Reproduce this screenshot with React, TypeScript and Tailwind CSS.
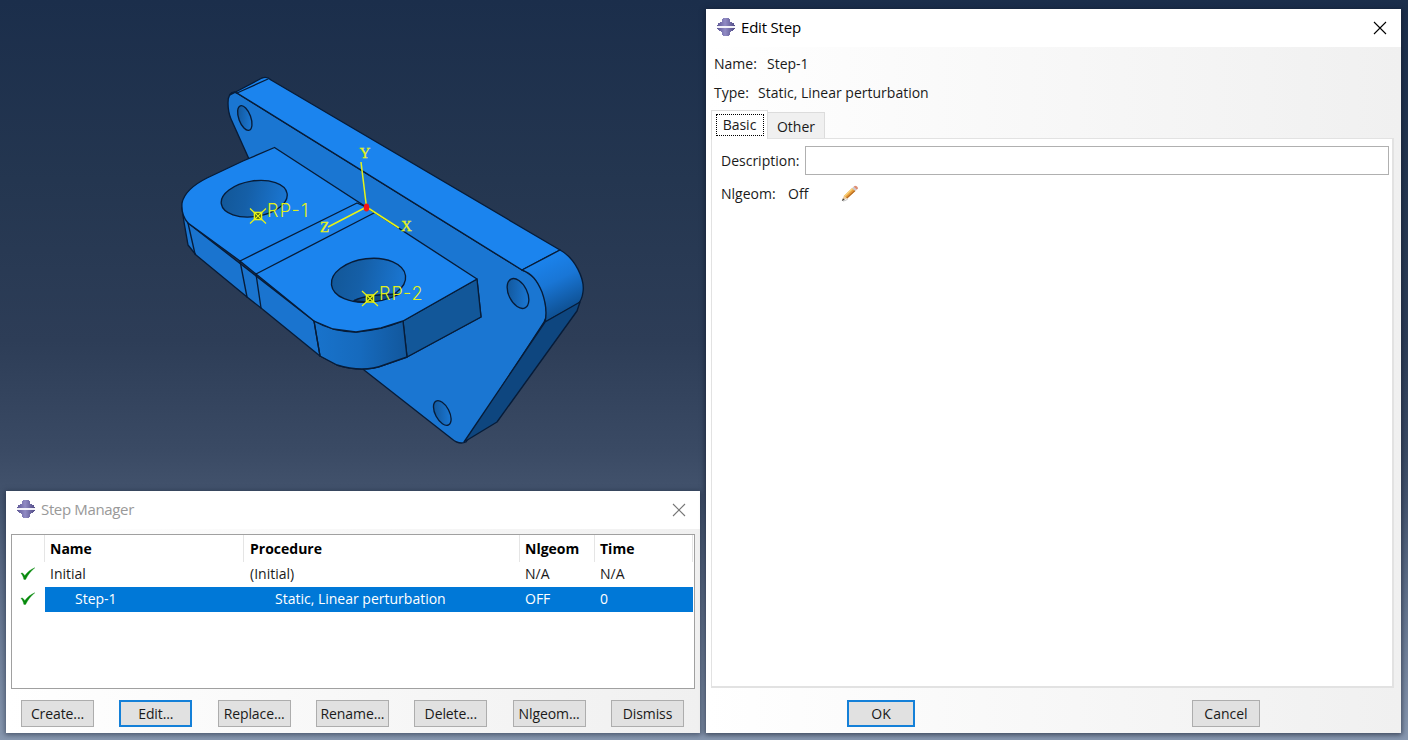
import React from "react";

function AppIcon() {
  return (
    <svg width="18" height="18" viewBox="0 0 18 18" className="shrink-0">
      <defs>
        <linearGradient id="ico" x1="0" x2="1" y1="0" y2="0">
          <stop offset="0" stopColor="#5d5795" />
          <stop offset="0.45" stopColor="#918bc4" />
          <stop offset="1" stopColor="#504a85" />
        </linearGradient>
      </defs>
      <path d="M6 0h6v1h1v3h2v1h2v2h1v1H0V7h1V5h2V4h2V1h1z" fill="url(#ico)" />
      <path d="M0 10h18v1h-1v1h-1v1h-2v1h-1v3h-1v1H6v-1H5v-3H4v-1H2v-1H1v-1H0z" fill="url(#ico)" />
      <path d="M0 8h18v2H0z" fill="#f4f3fa" />
    </svg>
  );
}

function CloseIcon({ color }: { color: string }) {
  return (
    <svg width="14" height="14" viewBox="0 0 14 14" className="shrink-0">
      <path d="M1 1l12 12M13 1L1 13" stroke={color} strokeWidth="1.1" fill="none" />
    </svg>
  );
}

function Check() {
  return (
    <svg width="16" height="14" viewBox="0 0 16 14">
      <path d="M1 6.5C2.2 5.6 3.2 6 4.7 8.8C7.4 5.2 10.6 2.4 14.8 0.8C10.9 3.8 8 7.6 5.6 12.4H3.9C3.3 9.8 2.5 7.8 1 6.5z" fill="#078a0c" stroke="#078a0c" strokeWidth="0.4" />
    </svg>
  );
}

function Pencil() {
  return (
    <svg width="18" height="17" viewBox="0 0 18 17">
      <path d="M1 15.5L3 10.5L6 13.5z" fill="#eccb9d" />
      <path d="M0.8 16L2 13.2L3.8 14.9z" fill="#444" />
      <path d="M3 10.7L11.2 3L14.4 6L6.2 13.6z" fill="#eaa03c" />
      <path d="M3 10.7L11.2 3L12.2 4L4 11.7z" fill="#f9d37d" />
      <path d="M5.2 12.7L13.5 5.2L14.4 6L6.2 13.6z" fill="#b46a24" />
      <path d="M11.2 3L12.6 1.8L15.8 4.8L14.4 6z" fill="#c9c9d2" />
      <path d="M12.6 1.8L14 0.7Q16.5 0.7 17 3.5L15.8 4.8z" fill="#dc8d73" />
      <path d="M2 16.2L5 15.2L7 13.7" stroke="#bbb" strokeWidth=".8" fill="none" />
    </svg>
  );
}

function Marker({ x, y }: { x: number; y: number }) {
  return (
    <g transform={`translate(${x} ${y})`} fill="none" stroke="#e6f318" strokeWidth="1.2">
      <path d="M-8-7.5L8 7.5M8-7.5L-8 7.5" />
      <rect x="-3.5" y="-3.5" width="7" height="7" fill="#23400f" stroke="#e6f318" strokeWidth="1.6" />
      <path d="M-3-3L3 3M3-3L-3 3" />
    </g>
  );
}

function Model() {
  return (
    <svg width="700" height="490" viewBox="0 0 700 490" className="block">
      <defs>
        <linearGradient id="cyl" gradientUnits="userSpaceOnUse" x1="540" y1="258" x2="566" y2="312">
          <stop offset="0" stopColor="#1b84ee" />
          <stop offset="0.45" stopColor="#1976d6" />
          <stop offset="1" stopColor="#0e4f90" />
        </linearGradient>
        <linearGradient id="round" x1="0" x2="1" y1="0" y2="0">
          <stop offset="0" stopColor="#1873cc" />
          <stop offset="0.5" stopColor="#166abd" />
          <stop offset="1" stopColor="#12579c" />
        </linearGradient>
        <linearGradient id="hole" x1="0" x2="1" y1="0.3" y2="0.5">
          <stop offset="0" stopColor="#125798" />
          <stop offset="0.4" stopColor="#155fa7" />
          <stop offset="1" stopColor="#1a76d2" />
        </linearGradient>
        <linearGradient id="small" x1="0" x2="1" y1="0" y2="1">
          <stop offset="0" stopColor="#115292" />
          <stop offset="1" stopColor="#1c7ee0" />
        </linearGradient>
      </defs>
      <g stroke="#071c38" strokeWidth="1.35" strokeLinejoin="round" strokeLinecap="round">
        <path d="M235 92Q228 92 228 103Q228 112 231 119L249 159L364 370L452 439Q459 445 466 442L544 322Q548 316 546 308C545 293 537 273 522 270z" fill="#1a76d2" />
        <path d="M230 95L262 78Q267 76 271 80L560 250L522 270L237 93Q233 91 230 95z" fill="#1b84ee" />
        <path d="M522 270L560 250C575 258 585 279 583 292Q582 300 578 304L545 322Q548 309 542 292C537 280 532 274 522 270z" fill="url(#cyl)" />
        <path d="M545 322L580 302L577 311L497 422L464 442z" fill="#0e467f" />
        <path d="M237 93L268 79" fill="none" />
        <path d="M182 208L184 222L188 245L196 255L247 297L261 308L320 356L337 365Q350 369 362 369Q374 369 384 365L407 357L481 317L477 280L403 321L314 321L188 223z" fill="#1a74cf" />
        <path d="M403 321L477 279L481 317L407 357z" fill="#125799" />
        <path d="M314 321Q333 332 356 332Q379 331 403 321L407 357L384 365Q374 369 362 369Q350 369 337 365L320 356z" fill="url(#round)" />
        <path d="M274.5 147.5L477 279L403 321L381 328L356 332L333 329L314 321L256 274L240 261L188 223Q181 215 182 203Q185 189 207 178L243 161z" fill="#1b84ee" />
        <path d="M188 223L195 254M240 261L247 297M256 274L261 308M314 321L320 356M240 261L357 203L366 207M256 274L374 213" fill="none" />
        <ellipse cx="254.2" cy="198.7" rx="33.3" ry="17.8" transform="rotate(-9 254.2 198.7)" fill="url(#hole)" />
        <ellipse cx="368.5" cy="280.3" rx="37.3" ry="21.7" transform="rotate(-7 368.5 280.3)" fill="url(#hole)" />
        <path d="M354 300.5Q368 294 400 294Q383 302 368 302Q358 302 354 300.5z" fill="#0e4984" />
        <ellipse cx="244.8" cy="118" rx="6" ry="13" transform="rotate(-20 244.8 118)" fill="url(#small)" />
        <ellipse cx="518" cy="293.5" rx="9.2" ry="16" transform="rotate(-26 518 293.5)" fill="url(#small)" />
        <ellipse cx="442.3" cy="413" rx="7" ry="13.4" transform="rotate(-28 442.3 413)" fill="url(#small)" />
      </g>
      <g stroke="#e6f318" strokeWidth="1.5" fill="none">
        <path d="M366.5 207L361 162M366.5 207L328 227M366.5 207L399 228" />
      </g>
      <ellipse cx="366.5" cy="207.5" rx="2.8" ry="4" fill="#f51414" />
      <Marker x={258} y={216} />
      <Marker x={370} y={298.5} />
      <g fill="#e0f01c" className="font-['Inter',sans-serif] text-[18px] font-light">
        <text x="267" y="217" textLength="41">RP-1</text>
        <text x="379" y="299.5" textLength="43.5">RP-2</text>
      </g>
      <g fill="#e6f318" stroke="#e6f318" strokeWidth="0.3" className="font-['Liberation_Serif',serif] text-[15px]">
        <text x="359.5" y="158">Y</text>
        <text x="401" y="231">X</text>
        <text x="320" y="231.5">Z</text>
      </g>
    </svg>
  );
}

function Button({ label, primary, w }: { label: string; primary?: boolean; w: string }) {
  return (
    <button
      className={`${w} flex h-[27px] shrink-0 items-center justify-center whitespace-nowrap bg-[#e1e1e1] ${
        primary ? "border-2 border-[#1480d8]" : "border border-[#adadad]"
      }`}
    >
      {label}
    </button>
  );
}

function TitleBar({ title, muted }: { title: string; muted?: boolean }) {
  return (
    <div className="flex h-[38px] shrink-0 items-center bg-white pl-[11px] pr-[14px]">
      <div className="flex flex-1 items-center pb-[2px]">
        <AppIcon />
        <span className={`ml-[6px] text-[15px] ${muted ? "text-[#999] tracking-[-0.35px]" : "text-black tracking-[-0.2px]"}`}>{title}</span>
      </div>
      <CloseIcon color={muted ? "#777" : "#000"} />
    </div>
  );
}

const cols = "grid grid-cols-[33px_199px_276px_75px_98px]";

function StepManager() {
  return (
    <section className="absolute left-[6px] top-[491px] flex h-[242px] w-[694px] flex-col bg-linear-to-r from-white to-[#f0f0f0] shadow-[0_1px_5px_1px_rgba(20,30,50,0.5)]">
      <TitleBar title="Step Manager" muted />
      <div className="ml-[5px] mt-[5px] h-[155px] w-[684px] shrink-0 border border-[#a0a0a0] bg-white">
        <div className={`${cols} h-[27px] items-center font-bold text-black`}>
          <span className="h-full border-r border-[#e5e5e5]" />
          <span className="flex h-full items-center border-r border-[#e5e5e5] pl-[5px]">Name</span>
          <span className="flex h-full items-center border-r border-[#e5e5e5] pl-[6px]">Procedure</span>
          <span className="flex h-full items-center border-r border-[#e5e5e5] pl-[5px]">Nlgeom</span>
          <span className="flex h-full items-center border-r border-[#e5e5e5] pl-[5px]">Time</span>
        </div>
        <div className={`${cols} h-[25px] items-center pb-[2px]`}>
          <span className="flex justify-center pr-[2px]"><Check /></span>
          <span className="pl-[5px]">Initial</span>
          <span className="pl-[6px]">(Initial)</span>
          <span className="pl-[5px]">N/A</span>
          <span className="pl-[5px]">N/A</span>
        </div>
        <div className="flex h-[25px] items-center">
          <span className="flex w-[33px] justify-center pb-[2px] pr-[2px]"><Check /></span>
          <div className="grid h-full w-[648px] grid-cols-[199px_276px_75px_98px] items-center bg-[#0078d7] pb-[2px] text-white">
            <span className="pl-[30px]">Step-1</span>
            <span className="pl-[31px]">Static, Linear perturbation</span>
            <span className="pl-[5px]">OFF</span>
            <span className="pl-[5px]">0</span>
          </div>
        </div>
      </div>
      <div className="mt-[11px] flex justify-between pl-[15px] pr-[16px] tracking-[-0.1px]">
        <Button w="w-[73px]" label="Create..." />
        <Button w="w-[73px]" label="Edit..." primary />
        <Button w="w-[73px]" label="Replace..." />
        <Button w="w-[73px]" label="Rename..." />
        <Button w="w-[73px]" label="Delete..." />
        <Button w="w-[73px]" label="Nlgeom..." />
        <Button w="w-[73px]" label="Dismiss" />
      </div>
    </section>
  );
}

function EditStep() {
  return (
    <section className="absolute left-[706px] top-[9px] flex h-[724px] w-[695px] flex-col bg-linear-to-r from-white to-[#f0f0f0] shadow-[0_1px_5px_1px_rgba(15,22,40,0.6)]">
      <TitleBar title="Edit Step" />
      <div className="flex h-[34px] items-center pl-[8px]">
        <span className="w-[53px]">Name:</span>
        <span>Step-1</span>
      </div>
      <div className="flex h-[24px] items-center pl-[8px]">
        <span className="w-[44px]">Type:</span>
        <span>Static, Linear perturbation</span>
      </div>
      <div className="ml-[5px] mt-[5px] flex h-[28px] items-end">
        <div className="z-10 -mb-px flex h-[29px] w-[57px] items-center justify-center border border-b-0 border-[#dcdcdc] bg-white">
          <span className="flex h-[22px] w-[48px] items-center justify-center border border-dotted border-black">Basic</span>
        </div>
        <div className="flex h-[26px] w-[57px] items-center justify-center border border-b-0 border-l-0 border-[#dcdcdc] bg-[#f0f0f0] pt-[3px]">Other</div>
      </div>
      <div className="ml-[5px] h-[550px] w-[683px] shrink-0 border border-b-2 border-r-2 border-[#e2e2e2] bg-white">
        <div className="mt-[7px] flex items-center pl-[9px]">
          <span className="w-[84px] whitespace-nowrap">Description:</span>
          <input className="h-[29px] w-[584px] border border-[#b0b0b0] bg-white outline-none" />
        </div>
        <div className="mt-[5px] flex h-[28px] items-center pl-[9px]">
          <span className="w-[67px]">Nlgeom:</span>
          <span className="w-[53px]">Off</span>
          <div className="pb-[2px]"><Pencil /></div>
        </div>
      </div>
      <div className="mt-[12px] flex justify-between pl-[141px] pr-[141px]">
        <Button w="w-[68px]" label="OK" primary />
        <Button w="w-[68px]" label="Cancel" />
      </div>
    </section>
  );
}

export default function App() {
  return (
    <main className="relative h-[740px] w-[1408px] overflow-hidden bg-[linear-gradient(to_bottom,#1b2e4b_0px,#243650_180px,#2d3d57_340px,#3a4a64_450px,#44546e_500px,#62728c_600px,#8898b0_740px)] font-['Open_Sans','Noto_Sans',sans-serif] text-[14px] leading-[20px] text-[#1a1a1a]">
      <Model />
      <StepManager />
      <EditStep />
    </main>
  );
}
